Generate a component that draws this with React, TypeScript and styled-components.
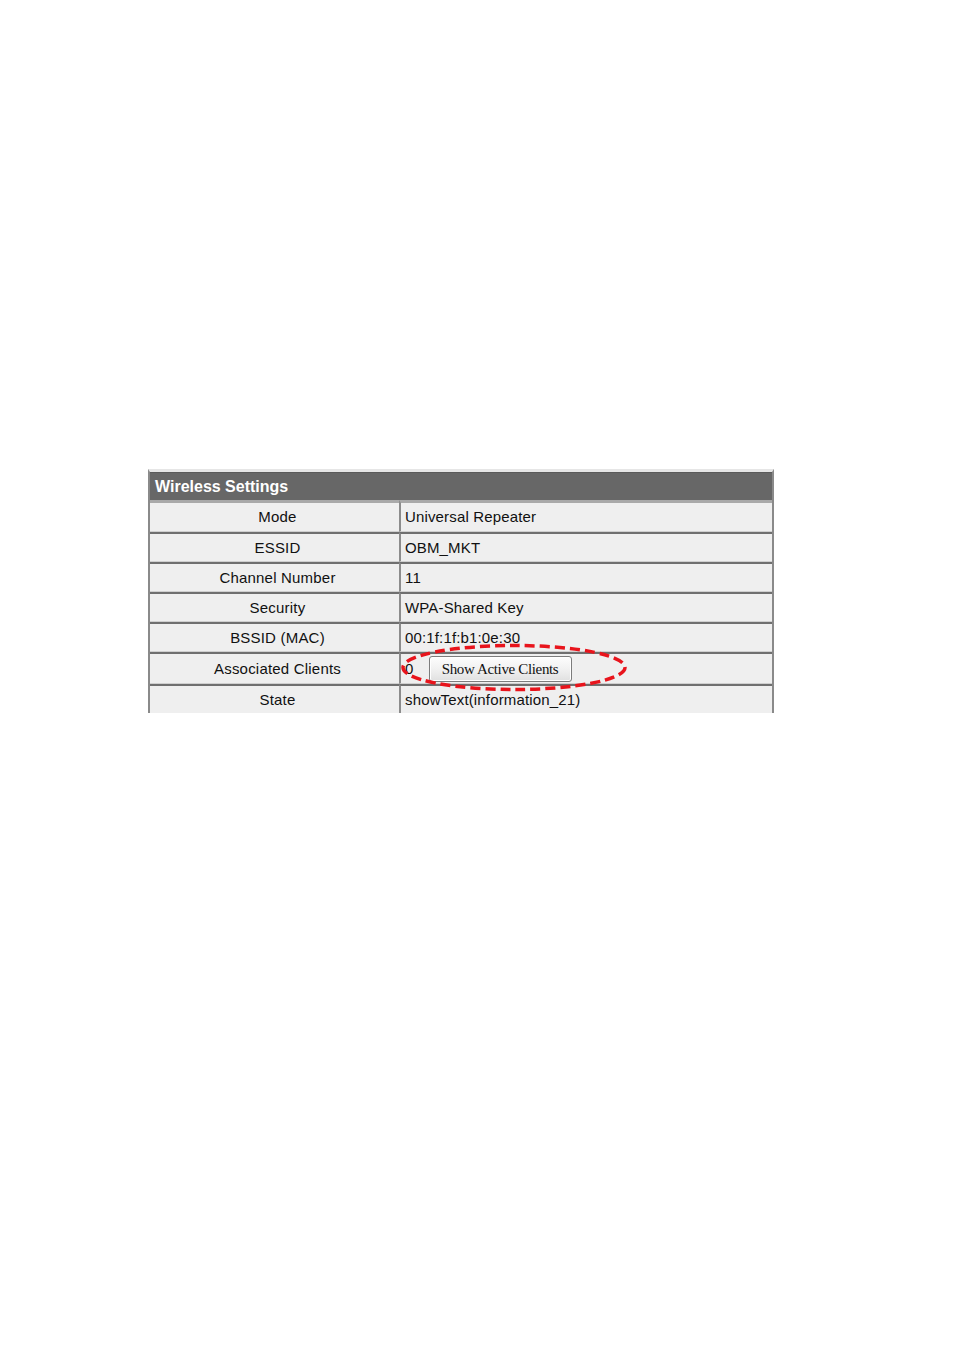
import React from "react";
import styled, { createGlobalStyle } from "styled-components";

const Global = createGlobalStyle`
  html, body { margin: 0; padding: 0; background: #ffffff; }
  body { font-family: "Liberation Sans", Arial, sans-serif; }
`;

const Page = styled.div`
  width: 954px;
  min-height: 1350px;
  padding: 469px 0 0 148px;
  box-sizing: border-box;
`;

const Table = styled.table`
  width: 626px;
  border-collapse: separate;
  border-spacing: 0;
  border-left: 2px solid #8a8a8a;
  border-right: 2px solid #8a8a8a;
  border-top: 3px solid #e6e6e6;
  table-layout: fixed;
`;

const Col = styled.col<{ $w: number }>`
  width: ${(p) => p.$w}px;
`;

const HeaderCell = styled.th`
  background: #676767;
  border-top: 1px solid #5a5a5a;
  padding: 0 0 0 5px;
  text-align: left;
  color: #ffffff;
  font-weight: bold;
  font-size: 16px;
  line-height: 27px;
`;

const Row = styled.tr<{ $first?: boolean; $last?: boolean; $h: number }>`
  background: #efefef;
  td {
    line-height: ${(p) => p.$h}px;
    border-top: ${(p) => (p.$first ? "3px solid #a9a9a9" : "2px solid #6f6f6f")};
    border-bottom: ${(p) => (p.$last ? "none" : "1px solid #cfcfcf")};
  }
`;

const LabelCell = styled.td`
  padding: 0 0 0 6px;
  text-align: center;
  font-size: 15px;
  letter-spacing: 0.2px;
  color: #111;
  vertical-align: middle;
  box-sizing: border-box;
`;

const ValueCell = styled.td`
  position: relative;
  border-left: 2px solid #8c8c8c;
  padding: 0 0 0 4px;
  font-size: 15px;
  letter-spacing: 0.15px;
  color: #111;
  vertical-align: middle;
  white-space: nowrap;
  box-sizing: border-box;
`;

const ValueLine = styled.div`
  display: flex;
  align-items: center;
  gap: 15px;
  height: 29px;
`;

const Button = styled.button`
  width: 143px;
  height: 26px;
  padding: 0;
  border: 1px solid #7c7c7c;
  border-radius: 3px;
  background: linear-gradient(#fdfdfd, #f1f1f1 50%, #e0e0e0);
  font-family: "Liberation Serif", "Times New Roman", serif;
  font-size: 15px;
  line-height: 24px;
  color: #111;
  letter-spacing: -0.35px;
  box-shadow: inset 0 0 0 1px #ffffff;
`;

const Circle = styled.svg`
  position: absolute;
  left: -1px;
  top: -12px;
  overflow: visible;
  z-index: 2;
  pointer-events: none;
`;

const rows: { label: string; value: string; h: number }[] = [
  { label: "Mode", value: "Universal Repeater", h: 28 },
  { label: "ESSID", value: "OBM_MKT", h: 27 },
  { label: "Channel Number", value: "11", h: 27 },
  { label: "Security", value: "WPA-Shared Key", h: 27 },
  { label: "BSSID (MAC)", value: "00:1f:1f:b1:0e:30", h: 27 },
];

export default function App() {
  return (
    <Page>
      <Global />
      <Table>
        <colgroup>
          <Col $w={249} />
          <Col $w={373} />
        </colgroup>
        <thead>
          <tr>
            <HeaderCell colSpan={2}>Wireless Settings</HeaderCell>
          </tr>
        </thead>
        <tbody>
          {rows.map((r, i) => (
            <Row key={r.label} $first={i === 0} $h={r.h}>
              <LabelCell>{r.label}</LabelCell>
              <ValueCell>{r.value}</ValueCell>
            </Row>
          ))}
          <Row $h={29}>
            <LabelCell>Associated Clients</LabelCell>
            <ValueCell>
              <ValueLine>
                <span>0</span>
                <Button type="button">Show Active Clients</Button>
              </ValueLine>
              <Circle width="230" height="52" viewBox="0 0 230 52">
                <ellipse
                  cx="114"
                  cy="25.5"
                  rx="111"
                  ry="22"
                  fill="none"
                  stroke="#e8141c"
                  strokeWidth="3.5"
                  strokeDasharray="10 5"
                />
              </Circle>
            </ValueCell>
          </Row>
          <Row $last $h={27}>
            <LabelCell>State</LabelCell>
            <ValueCell>showText(information_21)</ValueCell>
          </Row>
        </tbody>
      </Table>
    </Page>
  );
}
